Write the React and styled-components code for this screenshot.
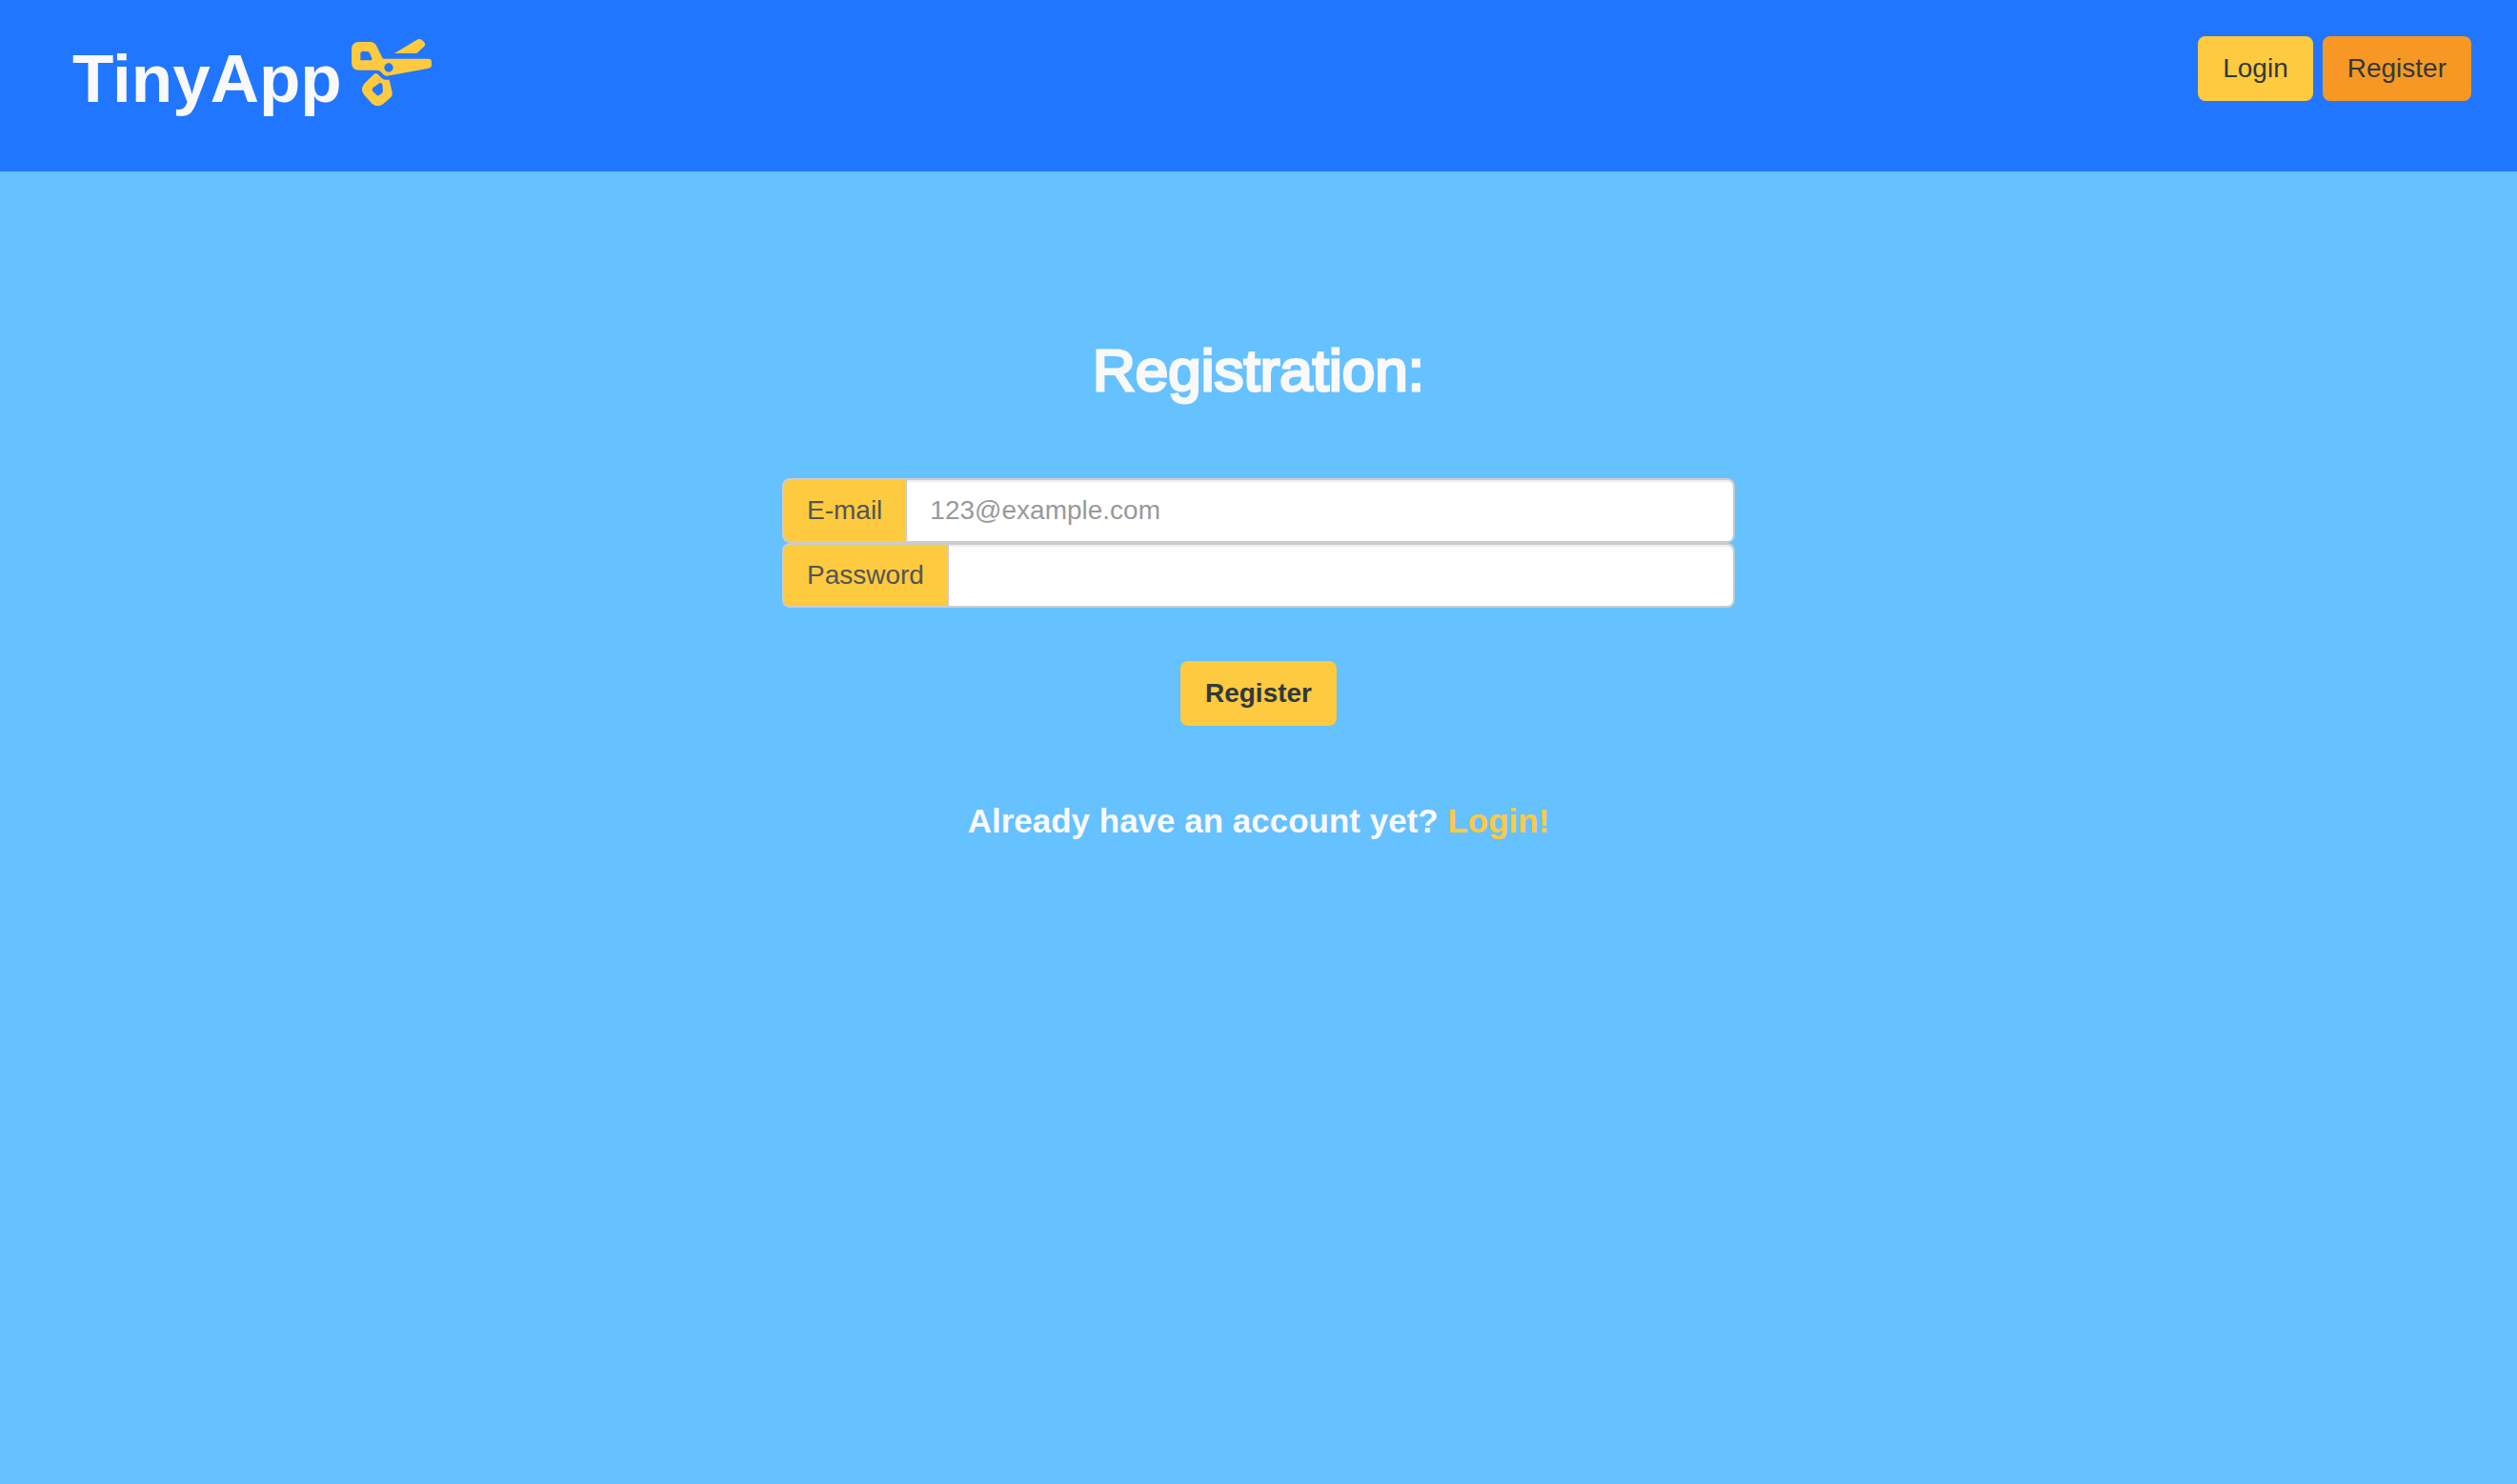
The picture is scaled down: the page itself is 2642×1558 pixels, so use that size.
import React from 'react';
import styled, { createGlobalStyle } from 'styled-components';

const colors = {
  header: '#2176ff',
  page: '#66c1ff',
  yellow: '#fdca40',
  orange: '#f79824',
  ink: '#31393c',
  light: '#f9f9f9',
  border: '#cccccc',
};

const GlobalStyle = createGlobalStyle`
  *, *::before, *::after {
    box-sizing: border-box;
  }
  body {
    margin: 0;
    background: ${colors.page};
    color: ${colors.light};
    font-family: "Liberation Sans", Arial, sans-serif;
    font-size: 28px;
    line-height: 40px;
  }
`;

const Header = styled.header`
  display: flex;
  justify-content: space-between;
  align-items: flex-start;
  min-height: 180px;
  padding: 38px 48px 38px 76px;
  background: ${colors.header};
`;

const Brand = styled.h1`
  display: flex;
  align-items: flex-start;
  gap: 10px;
  margin: 0;
  font-size: 71px;
  line-height: 90px;
`;

const ScissorsSvg = styled.svg`
  width: 84px;
  height: 76px;
  fill: ${colors.yellow};
`;

const Nav = styled.nav`
  display: flex;
  gap: 10px;
`;

const Button = styled.button`
  padding: 12px 24px;
  border: 2px solid transparent;
  border-radius: 8px;
  background: ${({ $tone }) => colors[$tone]};
  color: ${colors.ink};
  font: inherit;
  font-weight: ${({ $bold }) => ($bold ? 700 : 400)};
  cursor: pointer;
`;

const Main = styled.main`
  display: flex;
  flex-direction: column;
  align-items: center;
  padding: 176px 32px 64px;
`;

const Heading = styled.h2`
  margin: 0 0 80px;
  font-size: 62px;
  font-weight: 400;
  line-height: 66px;
  -webkit-text-stroke: 3px currentColor;
`;

const Form = styled.form`
  display: flex;
  flex-direction: column;
  align-items: center;
  width: 100%;
  max-width: 1000px;
`;

const Fields = styled.div`
  width: 100%;
  margin-bottom: 56px;
`;

const InputGroup = styled.div`
  display: flex;
  height: 68px;
`;

const Addon = styled.label`
  padding: 12px 24px;
  border: 2px solid ${colors.border};
  border-right: 0;
  border-radius: 8px 0 0 8px;
  background: ${colors.yellow};
  color: #555555;
`;

const Input = styled.input`
  flex: 1;
  min-width: 0;
  padding: 12px 24px;
  border: 2px solid ${colors.border};
  border-radius: 0 8px 8px 0;
  background: #ffffff;
  box-shadow: inset 0 2px 2px rgba(0, 0, 0, 0.075);
  color: #555555;
  font: inherit;

  &::placeholder {
    color: #999999;
    opacity: 1;
  }
`;

const Prompt = styled.p`
  margin: 80px 0 0;
  font-size: 35px;
  font-weight: 700;
`;

const PromptLink = styled.a`
  color: ${colors.yellow};
  text-decoration: none;
`;

function Scissors() {
  return (
    <ScissorsSvg viewBox="60 54 252 228" aria-hidden="true">
      <path
        fillRule="evenodd"
        d="M84 72H118C129 72 135 77 140 87L157 122Q158 125 163 125H302Q312 125 312 135V145Q312 153 303 155L172 179Q165 180 160 175L152 166Q148 161 140 161H84Q60 161 60 137V96Q60 72 84 72ZM96 102Q88 102 88 110V130H121Q126 130 124 124L118 108Q115 102 108 102ZM177 139A14 14 0 1 0 177 167A14 14 0 1 0 177 139Z"
      />
      <path d="M195 108L266 65Q274 61 281 65L288 72Q295 80 288 87L265 108Z" />
      <path
        fillRule="evenodd"
        d="M131 173Q137 168 143 174L154 185Q160 191 167 191H179L188 231Q190 241 182 248L160 267Q143 281 125 267L100 239Q86 222 100 203ZM128 216L148 202Q156 198 157 207L159 225Q160 230 155 234L147 240Q143 243 139 239L128 229Q122 222 128 216Z"
      />
    </ScissorsSvg>
  );
}

export default function App() {
  return (
    <>
      <GlobalStyle />
      <Header>
        <Brand>
          TinyApp
          <Scissors />
        </Brand>
        <Nav>
          <Button type="button" $tone="yellow">Login</Button>
          <Button type="button" $tone="orange">Register</Button>
        </Nav>
      </Header>
      <Main>
        <Heading>Registration:</Heading>
        <Form onSubmit={(event) => event.preventDefault()}>
          <Fields>
            <InputGroup>
              <Addon htmlFor="email">E-mail</Addon>
              <Input id="email" name="email" type="email" placeholder="123@example.com" />
            </InputGroup>
            <InputGroup>
              <Addon htmlFor="password">Password</Addon>
              <Input id="password" name="password" type="password" />
            </InputGroup>
          </Fields>
          <Button type="submit" $tone="yellow" $bold>Register</Button>
        </Form>
        <Prompt>
          Already have an account yet? <PromptLink href="#login">Login!</PromptLink>
        </Prompt>
      </Main>
    </>
  );
}
